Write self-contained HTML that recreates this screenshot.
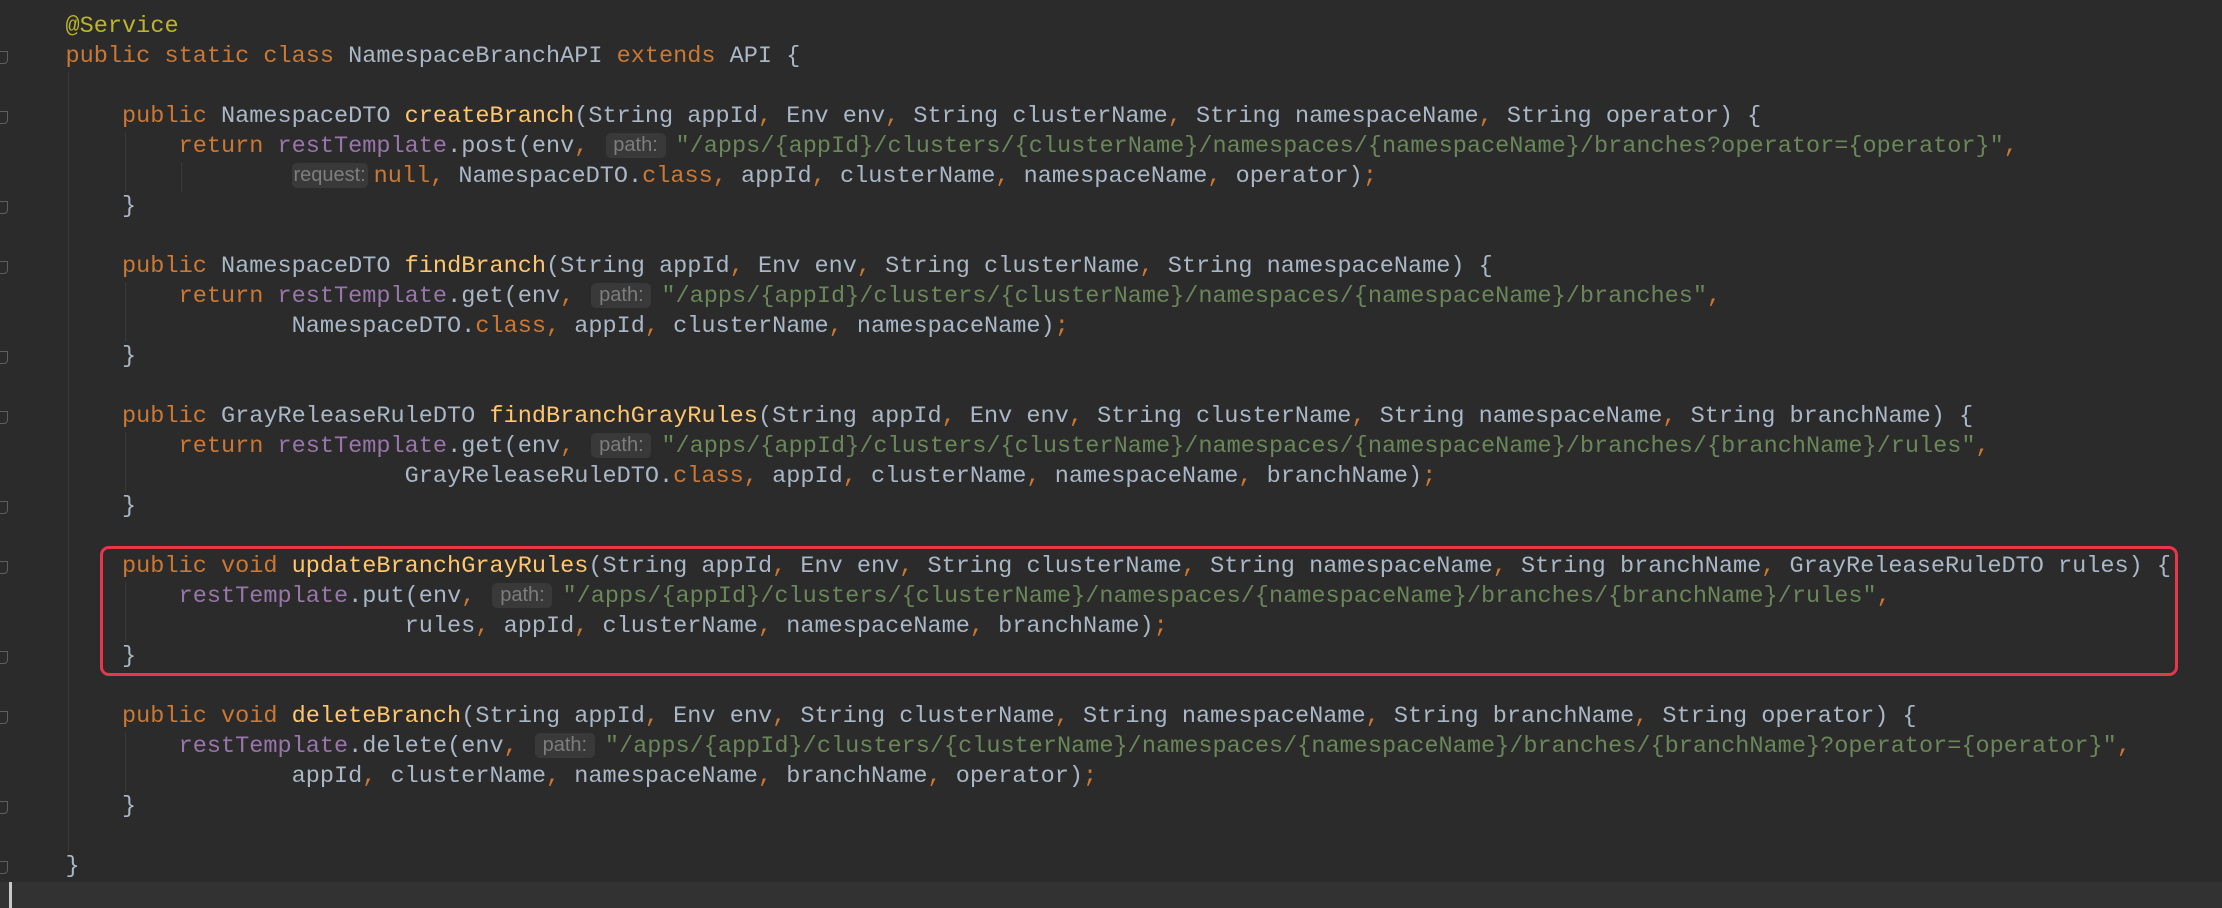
<!DOCTYPE html>
<html><head><meta charset="utf-8"><style>
html,body{margin:0;padding:0;}
body{width:2222px;height:908px;background:#2b2b2b;overflow:hidden;position:relative;font-family:"Liberation Mono",monospace;font-size:23.55px;color:#a9b7c6;}
.l{position:absolute;left:9px;height:30px;line-height:30px;white-space:pre;}
.k{color:#cc7832}.f{color:#ffc66d}.s{color:#6a8759}.p{color:#9876aa}.a{color:#bbb529}
.h{display:inline-block;font-family:"Liberation Sans",sans-serif;font-size:20px;color:#7d7d7d;background:#393939;border-radius:5px;line-height:25px;height:25px;text-align:center;vertical-align:1px;}
.hp{width:60px;margin-left:3px;margin-right:10px;}
.hr{width:76px;margin-right:6px;}
.g{position:absolute;width:1px;background:#393939;}
.box{position:absolute;left:100px;top:546px;width:2072px;height:124px;border:3px solid #e8364a;border-radius:9px;}
.cur{position:absolute;left:0;top:882px;width:2222px;height:26px;background:#323232;}
.caret{position:absolute;left:9px;top:882px;width:3px;height:26px;background:#c8c8c8;}
.ic{position:absolute;left:-3px;width:9px;height:11px;border:1.5px solid #5e5e5e;border-radius:0 0 4px 4px;}
</style></head><body>
<div class="cur"></div><div class="caret"></div>
<div class="g" style="left:68px;top:72px;height:780px"></div>
<div class="g" style="left:125px;top:132px;height:60px"></div>
<div class="g" style="left:125px;top:282px;height:60px"></div>
<div class="g" style="left:125px;top:432px;height:60px"></div>
<div class="g" style="left:125px;top:582px;height:60px"></div>
<div class="g" style="left:125px;top:732px;height:60px"></div>
<div class="g" style="left:181px;top:162px;height:30px"></div>
<div class="ic" style="top:51px"></div>
<div class="ic" style="top:111px"></div>
<div class="ic" style="top:201px"></div>
<div class="ic" style="top:261px"></div>
<div class="ic" style="top:351px"></div>
<div class="ic" style="top:411px"></div>
<div class="ic" style="top:501px"></div>
<div class="ic" style="top:561px"></div>
<div class="ic" style="top:651px"></div>
<div class="ic" style="top:711px"></div>
<div class="ic" style="top:801px"></div>
<div class="ic" style="top:861px"></div>

<div class="l" style="top:12px">    <span class="a">@Service</span></div>
<div class="l" style="top:42px">    <span class="k">public static class </span>NamespaceBranchAPI <span class="k">extends </span>API {</div>
<div class="l" style="top:102px">        <span class="k">public </span>NamespaceDTO <span class="f">createBranch</span>(String appId<span class="k">, </span>Env env<span class="k">, </span>String clusterName<span class="k">, </span>String namespaceName<span class="k">, </span>String operator) {</div>
<div class="l" style="top:132px">            <span class="k">return </span><span class="p">restTemplate</span>.post(env<span class="k">, </span><span class="h hp">path:</span><span class="s">"/apps/{appId}/clusters/{clusterName}/namespaces/{namespaceName}/branches?operator={operator}"</span><span class="k">,</span></div>
<div class="l" style="top:162px">                    <span class="h hr">request:</span><span class="k">null, </span>NamespaceDTO.<span class="k">class, </span>appId<span class="k">, </span>clusterName<span class="k">, </span>namespaceName<span class="k">, </span>operator)<span class="k">;</span></div>
<div class="l" style="top:192px">        }</div>
<div class="l" style="top:252px">        <span class="k">public </span>NamespaceDTO <span class="f">findBranch</span>(String appId<span class="k">, </span>Env env<span class="k">, </span>String clusterName<span class="k">, </span>String namespaceName) {</div>
<div class="l" style="top:282px">            <span class="k">return </span><span class="p">restTemplate</span>.get(env<span class="k">, </span><span class="h hp">path:</span><span class="s">"/apps/{appId}/clusters/{clusterName}/namespaces/{namespaceName}/branches"</span><span class="k">,</span></div>
<div class="l" style="top:312px">                    NamespaceDTO.<span class="k">class, </span>appId<span class="k">, </span>clusterName<span class="k">, </span>namespaceName)<span class="k">;</span></div>
<div class="l" style="top:342px">        }</div>
<div class="l" style="top:402px">        <span class="k">public </span>GrayReleaseRuleDTO <span class="f">findBranchGrayRules</span>(String appId<span class="k">, </span>Env env<span class="k">, </span>String clusterName<span class="k">, </span>String namespaceName<span class="k">, </span>String branchName) {</div>
<div class="l" style="top:432px">            <span class="k">return </span><span class="p">restTemplate</span>.get(env<span class="k">, </span><span class="h hp">path:</span><span class="s">"/apps/{appId}/clusters/{clusterName}/namespaces/{namespaceName}/branches/{branchName}/rules"</span><span class="k">,</span></div>
<div class="l" style="top:462px">                            GrayReleaseRuleDTO.<span class="k">class, </span>appId<span class="k">, </span>clusterName<span class="k">, </span>namespaceName<span class="k">, </span>branchName)<span class="k">;</span></div>
<div class="l" style="top:492px">        }</div>
<div class="l" style="top:552px">        <span class="k">public void </span><span class="f">updateBranchGrayRules</span>(String appId<span class="k">, </span>Env env<span class="k">, </span>String clusterName<span class="k">, </span>String namespaceName<span class="k">, </span>String branchName<span class="k">, </span>GrayReleaseRuleDTO rules) {</div>
<div class="l" style="top:582px">            <span class="p">restTemplate</span>.put(env<span class="k">, </span><span class="h hp">path:</span><span class="s">"/apps/{appId}/clusters/{clusterName}/namespaces/{namespaceName}/branches/{branchName}/rules"</span><span class="k">,</span></div>
<div class="l" style="top:612px">                            rules<span class="k">, </span>appId<span class="k">, </span>clusterName<span class="k">, </span>namespaceName<span class="k">, </span>branchName)<span class="k">;</span></div>
<div class="l" style="top:642px">        }</div>
<div class="l" style="top:702px">        <span class="k">public void </span><span class="f">deleteBranch</span>(String appId<span class="k">, </span>Env env<span class="k">, </span>String clusterName<span class="k">, </span>String namespaceName<span class="k">, </span>String branchName<span class="k">, </span>String operator) {</div>
<div class="l" style="top:732px">            <span class="p">restTemplate</span>.delete(env<span class="k">, </span><span class="h hp">path:</span><span class="s">"/apps/{appId}/clusters/{clusterName}/namespaces/{namespaceName}/branches/{branchName}?operator={operator}"</span><span class="k">,</span></div>
<div class="l" style="top:762px">                    appId<span class="k">, </span>clusterName<span class="k">, </span>namespaceName<span class="k">, </span>branchName<span class="k">, </span>operator)<span class="k">;</span></div>
<div class="l" style="top:792px">        }</div>
<div class="l" style="top:852px">    }</div>
<div class="box"></div>
</body></html>
